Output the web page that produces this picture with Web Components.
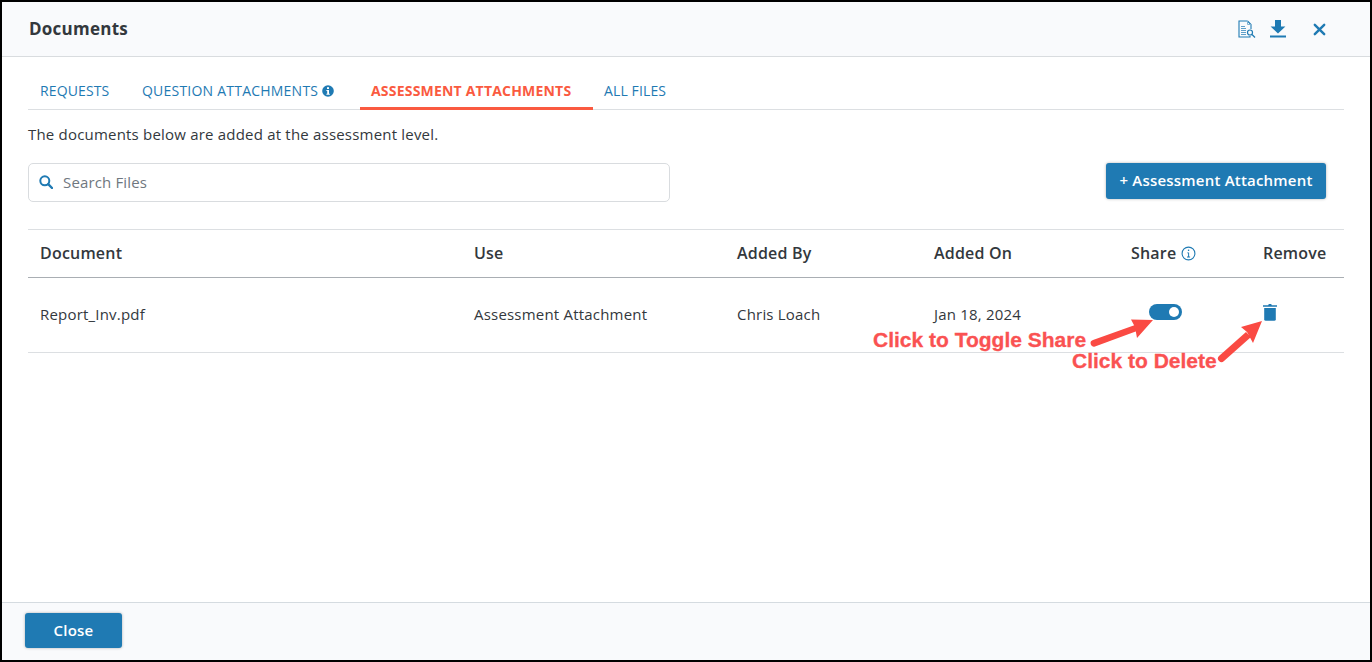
<!DOCTYPE html>
<html><head><meta charset="utf-8"><style>
html,body{margin:0;padding:0;width:1372px;height:662px;overflow:hidden;background:#fff;font-family:"Open Sans",sans-serif;}
</style></head><body>
<doc-modal>
  <span slot="title">Documents</span>
  <doc-tabs slot="tabs"></doc-tabs>
  <p slot="intro">The documents below are added at the assessment level.</p>
  <doc-search slot="search"></doc-search>
  <doc-button slot="action" style="width:220px;height:36px;padding-bottom:3px">+ Assessment Attachment</doc-button>
  <doc-table slot="table"></doc-table>
  <doc-button slot="footer" style="width:97px;height:35px">Close</doc-button>
</doc-modal>
<script>
const def=(name,html,init)=>customElements.define(name,class extends HTMLElement{
  constructor(){super();this.attachShadow({mode:"open"}).innerHTML=html;}
  connectedCallback(){init&&init(this)}
});
const B="#1f7ab3";
def("doc-button",`<style>:host{display:inline-flex;box-sizing:border-box;align-items:center;justify-content:center;background:${B};color:#fff;border-radius:3px;font:600 15px/20px "Open Sans",sans-serif;letter-spacing:.2px;box-shadow:0 0 3px rgba(0,0,0,.3);padding-bottom:1px}</style><slot></slot>`);
def("doc-tabs",`<style>
:host{display:flex;height:39px;box-sizing:border-box;border-bottom:1px solid #dcdfe2;font:400 14px/18px "Open Sans",sans-serif;color:${B}}
.t{box-sizing:border-box;height:39px;padding:11px 11px 0;display:flex;gap:4px;align-items:flex-start;white-space:nowrap;letter-spacing:.13px}
.q{letter-spacing:.22px}
.a{color:#fa5a40;font-weight:700;border-bottom:3px solid #fa5a40;letter-spacing:.2px}
svg{width:12px;height:12px;margin-top:3px}
</style>
<div class="t" style="width:114px;padding-left:12px">REQUESTS</div>
<div class="t q" style="width:218px;padding-left:0">QUESTION ATTACHMENTS <svg viewBox="0 0 12 12"><circle cx="6" cy="6" r="5.800" fill="${B}"/><rect x="5" y="2.200" width="2" height="1.800" fill="#fff"/><path d="M4.400 5h2.600v3.800h.8v1H4.400v-1h.8V6h-.8z" fill="#fff"/></svg></div>
<div class="t a" style="width:233px">ASSESSMENT ATTACHMENTS</div>
<div class="t">ALL FILES</div>`);
def("doc-search",`<style>
:host{display:flex;box-sizing:border-box;width:642px;height:39px;border:1px solid #d9dcdf;border-radius:5px;align-items:center;padding:0 0 1px 10px;gap:10px;font:400 15px/20px "Open Sans",sans-serif;color:#6f7780;letter-spacing:.15px;background:#fff}
svg{width:14px;height:14px;flex:none}
</style>
<svg viewBox="0 0 14 14" fill="none" stroke="${B}"><circle cx="5.800" cy="5.800" r="4.500" stroke-width="2"/><path d="M9.200 9.200L13 13" stroke-width="2.400" stroke-linecap="round"/></svg><span>Search Files</span>`);
def("doc-table",`<style>
:host{display:block;color:#33383d;font:400 15px/20px "Open Sans",sans-serif}
.r{display:grid;grid-template-columns:434px 263px 197px 197px 132px 93px;box-sizing:border-box;padding-left:12px}
.h{height:49px;border-top:1px solid #dcdfe2;border-bottom:1px solid #a9aeb3;align-items:center;font-weight:600;font-size:16px;letter-spacing:.2px;padding-bottom:1px}
.b{height:75px;border-bottom:1px solid #dcdfe2;padding-top:26px;letter-spacing:.2px}
.s{display:flex;align-items:center;gap:5px}
.s svg{width:15px;height:15px;margin-top:1px}
.tg{position:relative;width:33px;height:16px;border-radius:8px;background:${B};margin:0 0 0 18px}
.tg i{position:absolute;right:3px;top:3px;width:10px;height:10px;border-radius:50%;background:#fff}
.tr{display:block;margin:-2px 0 0 -1px;width:16px;height:20px}
</style>
<div class="r h"><div>Document</div><div>Use</div><div>Added By</div><div>Added On</div>
<div class="s">Share <svg viewBox="0 0 15 15" fill="none"><circle cx="7.500" cy="7.500" r="6.400" stroke="${B}" stroke-width="1.100"/><rect x="6.900" y="3.600" width="1.300" height="1.400" fill="${B}"/><path d="M6.200 6.400h1.900v4.100h1v.9H6v-.9h1.100V7.300h-.9z" fill="${B}"/></svg></div><div>Remove</div></div>
<div class="r b"><div>Report_Inv.pdf</div><div>Assessment Attachment</div><div>Chris Loach</div><div>Jan 18, 2024</div>
<div><div class="tg"><i></i></div></div>
<div><svg class="tr" viewBox="0 0 16 20"><path d="M1 3.200h5.200l.6-1.200h2.400l.6 1.200H15v1.600H1z" fill="${B}"/><path d="M2.200 6h11.600v11.200a1.600 1.600 0 0 1-1.600 1.600H3.800a1.600 1.600 0 0 1-1.600-1.600z" fill="${B}"/></svg></div></div>`);
def("doc-modal",`<style>
:host{display:flex;flex-direction:column;box-sizing:border-box;width:1372px;height:662px;border:2px solid #000;position:relative;color:#33383d;background:#fff}
header{flex:none;box-sizing:border-box;height:55px;background:#f9fafc;border-bottom:1px solid #d9dcdf;display:flex;align-items:center;padding:0 44px 0 27px;font:700 17px/22px "Open Sans",sans-serif;letter-spacing:.25px;color:#33383d}
.title{flex:1;padding-bottom:1px}
.ic{display:flex;align-items:center}
main{flex:1;padding:14px 26px 0;min-height:0}
.intro{height:53px}
::slotted(p){margin:0;padding-top:14px;font:400 15px/20px "Open Sans",sans-serif;letter-spacing:.2px;color:#33383d}
.tools{display:flex;justify-content:space-between;align-items:flex-start;height:66px;padding-right:18px}
footer{flex:none;box-sizing:border-box;height:58px;background:#f9fafc;border-top:1px solid #d5dbe0;padding:10px 0 0 23px}
.over{position:absolute;left:-2px;top:-2px;width:1372px;height:662px;pointer-events:none}
.l{position:absolute;font:700 21px/24px "Liberation Sans",Arial,sans-serif;color:#fa5252;white-space:nowrap;-webkit-text-stroke:.3px #fa5252}
svg.a{position:absolute;left:0;top:0}
</style>
<header><div class="title"><slot name="title"></slot></div>
<div class="ic">
<svg width="18" height="19" viewBox="0 0 18 19" fill="none" style="margin-right:14px"><path d="M9.500 1H1v16h11v-1" stroke="${B}" stroke-width="1.100"/><path d="M9.500 1l3.500 3.500V9" stroke="${B}" stroke-width="1.100"/><path d="M9.500 1v3.500H13" stroke="#7fb2d3" stroke-width="1"/><path d="M3 6.500h4M3 8.500h5M3 10.500h5M3 12.500h5M3 14.500h5" stroke="#5f9fc9" stroke-width="1.200"/><circle cx="12" cy="12.500" r="2.500" stroke="${B}" stroke-width="1.200"/><path d="M14 14.500L17 17.500" stroke="${B}" stroke-width="1.300"/></svg>
<svg width="16" height="18" viewBox="0 0 16 18" style="margin-right:27px"><path d="M5 0h6v6.500h4.400L8 13.500.6 6.500H5z" fill="${B}"/><rect x="0" y="15.500" width="16" height="2" fill="${B}"/></svg>
<svg width="13" height="13" viewBox="0 0 13 13"><path d="M1.800 1.800l9.400 9.400M11.200 1.800l-9.400 9.400" stroke="${B}" stroke-width="2.400" stroke-linecap="round"/></svg>
</div></header>
<main><slot name="tabs"></slot><div class="intro"><slot name="intro"></slot></div>
<div class="tools"><slot name="search"></slot><div><slot name="action"></slot></div></div>
<slot name="table"></slot></main>
<footer><slot name="footer"></slot></footer>
<div class="over">
<svg class="a" width="1372" height="662" fill="#fa4a43" stroke="none">
<path d="M1093 340L1135 325L1137 331L1095 346.500A3.300 3.300 0 0 1 1093 340Z"/>
<path d="M1153 320L1131 319.500L1135 327L1137 338Z"/>
<path d="M1219 356L1246 332L1251 337L1224 361A3.500 3.500 0 0 1 1219 356Z"/>
<path d="M1262 321L1241 327L1247 332L1253 343Z"/>
</svg>
<span class="l" style="left:873px;top:328px">Click to Toggle Share</span>
<span class="l" style="left:1072px;top:349px">Click to Delete</span>
</div>`);
</script>
</body></html>
